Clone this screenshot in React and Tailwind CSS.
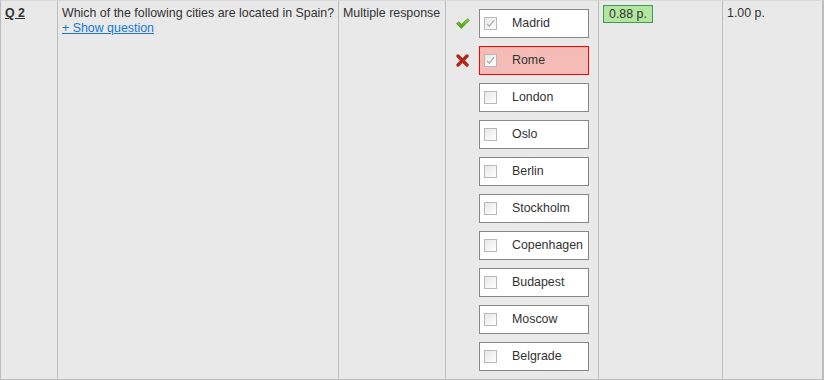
import React from 'react';

const choices = [
  { label: 'Madrid', checked: true, mark: 'ok' },
  { label: 'Rome', checked: true, mark: 'bad' },
  { label: 'London' },
  { label: 'Oslo' },
  { label: 'Berlin' },
  { label: 'Stockholm' },
  { label: 'Copenhagen' },
  { label: 'Budapest' },
  { label: 'Moscow' },
  { label: 'Belgrade' },
];

const CheckMark = () => (
  <svg width="14" height="11" viewBox="0 0 14 11">
    <defs>
      <linearGradient id="gck" x1="0" y1="0" x2="0" y2="1">
        <stop offset="0" stopColor="#8fd23a" />
        <stop offset="1" stopColor="#4b9a12" />
      </linearGradient>
    </defs>
    <path d="M0.5 5.5 L3 3.8 L5.3 6.3 L11.8 0.5 L13.5 2.2 L5.3 10.5 Z" fill="url(#gck)" stroke="#4a8f1a" strokeWidth="0.6" strokeLinejoin="round" />
  </svg>
);

const CrossMark = () => (
  <svg width="13" height="13" viewBox="0 0 13 13">
    <path d="M2 2 L11 11 M11 2 L2 11" stroke="#b3261e" strokeWidth="3.4" strokeLinecap="round" />
  </svg>
);

const Box = ({ checked }) => (
  <span className="w-[13px] h-[13px] border border-[#b8b8b8] bg-gradient-to-br from-[#e8e8e8] to-white flex items-center justify-center shrink-0">
    {checked && (
      <svg width="9" height="9" viewBox="0 0 9 9">
        <path d="M1 4.8 L3.4 7.2 L8 1.2" stroke="#a8a8a8" strokeWidth="1.2" fill="none" />
      </svg>
    )}
  </span>
);

export default function App() {
  return (
    <div className="w-[824px] h-[380px] bg-[#e9e9e9] text-[#333] text-[12.4px] leading-[15px] font-['Liberation_Sans',Arial,sans-serif] flex border-l border-b border-r-2 border-[#bdbdbd] border-t border-t-[#d9d9d9]">
      <div className="w-[57px] shrink-0 border-r border-[#bdbdbd] px-1 pt-[5px]">
        <span className="font-bold underline">Q 2</span>
      </div>
      <div className="w-[281px] shrink-0 border-r border-[#bdbdbd] px-1 pt-[5px]">
        <div className="whitespace-nowrap">Which of the following cities are located in Spain?</div>
        <a href="#" className="text-[#1a78d2] underline">+ Show question</a>
      </div>
      <div className="w-[107px] shrink-0 border-r border-[#bdbdbd] px-1 pt-[5px] whitespace-nowrap">Multiple response</div>
      <div className="w-[153px] shrink-0 border-r border-[#bdbdbd] pt-[8px] flex flex-col gap-[8px]">
        {choices.map((c) => (
          <div key={c.label} className="flex items-center">
            <div className="w-[33px] flex justify-center">
              {c.mark === 'ok' && <CheckMark />}
              {c.mark === 'bad' && <CrossMark />}
            </div>
            <div
              className={`w-[110px] h-[29px] border flex items-center pl-[4px] ${
                c.mark === 'bad' ? 'bg-[#f5bcb7] border-[#f00]' : 'bg-white border-[#888]'
              }`}
            >
              <Box checked={c.checked} />
              <span className="ml-[15px] whitespace-nowrap">{c.label}</span>
            </div>
          </div>
        ))}
      </div>
      <div className="w-[124px] shrink-0 border-r border-[#bdbdbd] pl-[4px] pt-[4px]">
        <span className="inline-block h-[18px] px-[5px] leading-[16px] bg-[#b3e69f] border border-[#3c9a5a]">0.88 p.</span>
      </div>
      <div className="flex-1 px-1 pt-[5px]">1.00 p.</div>
    </div>
  );
}
